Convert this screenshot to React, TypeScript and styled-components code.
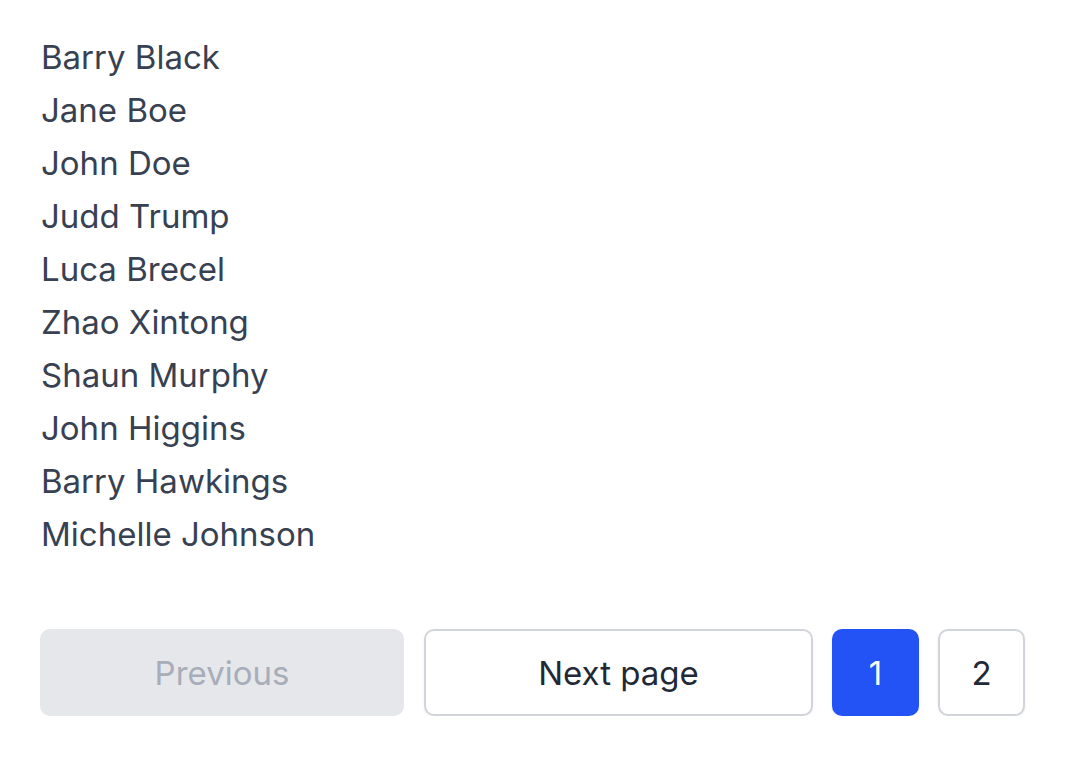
import styled, { createGlobalStyle } from 'styled-components';

const GlobalStyle = createGlobalStyle`
  html, body {
    margin: 0;
    padding: 0;
    background: #ffffff;
  }
  body {
    font-family: Inter, "Liberation Sans", Arial, sans-serif;
  }
`;

const Page = styled.div`
  padding: 31px 40px 0 40px;
`;

const NameList = styled.ul`
  list-style: none;
  margin: 0;
  padding: 0 0 0 1px;
`;

const NameItem = styled.li`
  font-size: 33px;
  line-height: 53px;
  color: #374151;
`;

const Pager = styled.nav`
  display: flex;
  align-items: center;
  gap: 19px;
  margin-top: 68px;
`;

const PageButton = styled.button<{ $width: number; $variant?: 'disabled' | 'outline' | 'active' }>`
  width: ${({ $width }) => $width}px;
  height: 87px;
  box-sizing: border-box;
  border-radius: 10px;
  font-family: inherit;
  font-size: 33px;
  display: flex;
  align-items: center;
  justify-content: center;
  cursor: pointer;
  border: 2px solid #d1d5db;
  background: #ffffff;
  color: #1f2937;
  box-shadow: 0 1px 3px rgba(0, 0, 0, 0.06);

  ${({ $variant }) =>
    $variant === 'disabled' &&
    `
    background: #e5e7eb;
    border-color: #e5e7eb;
    color: #a7adb9;
    box-shadow: none;
    cursor: not-allowed;
  `}

  ${({ $variant }) =>
    $variant === 'active' &&
    `
    background: #2352f5;
    border-color: #2352f5;
    color: #ffffff;
  `}
`;

const names = [
  'Barry Black',
  'Jane Boe',
  'John Doe',
  'Judd Trump',
  'Luca Brecel',
  'Zhao Xintong',
  'Shaun Murphy',
  'John Higgins',
  'Barry Hawkings',
  'Michelle Johnson',
];

export default function App() {
  return (
    <>
      <GlobalStyle />
      <Page>
        <NameList>
          {names.map((n) => (
            <NameItem key={n}>{n}</NameItem>
          ))}
        </NameList>
        <Pager>
          <PageButton $width={364} $variant="disabled" disabled>Previous</PageButton>
          <PageButton $width={389} $variant="outline" style={{ marginLeft: 1 }}>Next page</PageButton>
          <PageButton $width={87} $variant="active">1</PageButton>
          <PageButton $width={87} $variant="outline">2</PageButton>
        </Pager>
      </Page>
    </>
  );
}
